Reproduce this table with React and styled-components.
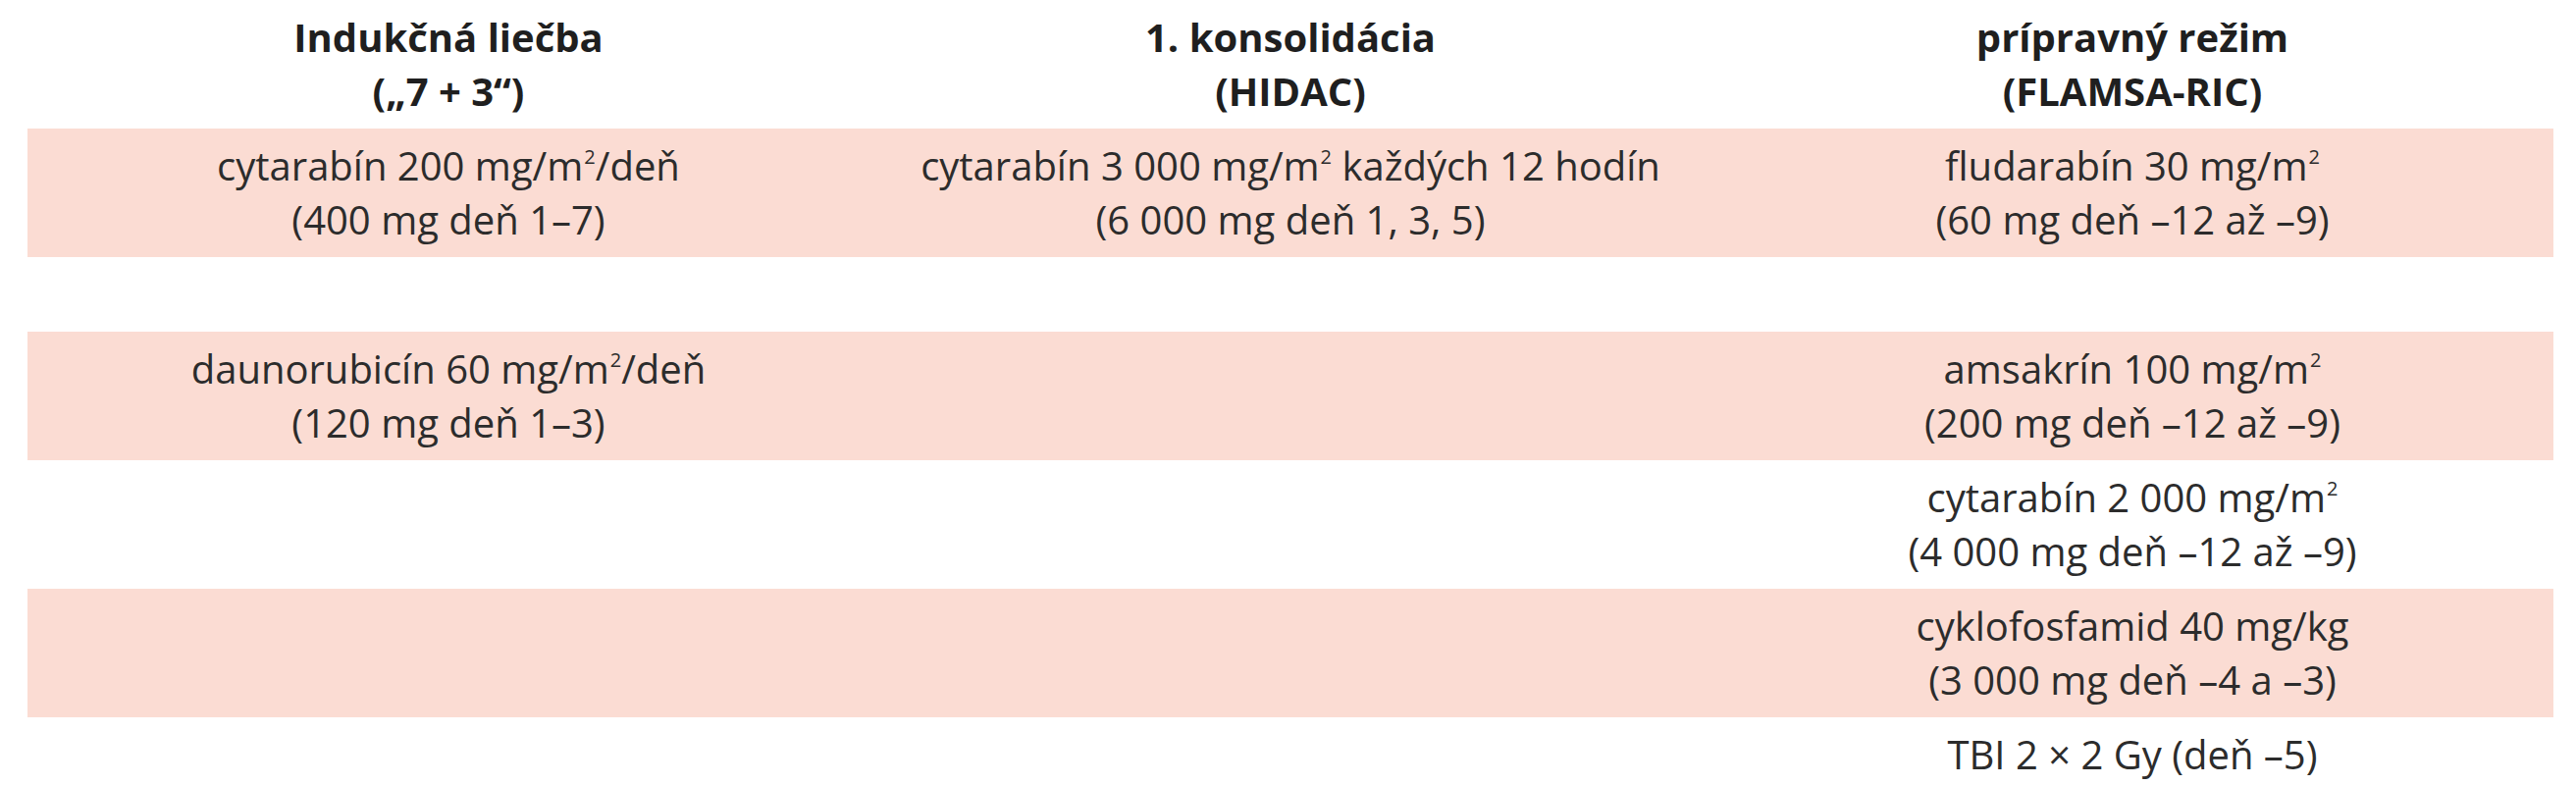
import React from "react";
import styled, { createGlobalStyle } from "styled-components";

const GlobalStyle = createGlobalStyle`
  html, body {
    margin: 0;
    padding: 0;
    background: #ffffff;
  }
  body {
    font-family: "Open Sans", "Noto Sans", sans-serif;
    color: #2a2a2a;
  }
`;

const Page = styled.div`
  padding: 0 23px 0 28px;
`;

const Table = styled.table`
  width: 2574px;
  border-collapse: collapse;
  border-spacing: 0;
  table-layout: fixed;
`;

const Row = styled.tr`
  background: ${(p) => (p.$shaded ? "#fbdcd3" : "transparent")};
`;

const HeadCell = styled.th`
  padding: 10px 12px 11px;
  font-size: 40px;
  line-height: 55px;
  font-weight: 700;
  color: #1f1f1f;
  text-align: center;
  vertical-align: middle;
`;

const Cell = styled.td`
  padding: 10px 12px 11px;
  font-size: 40px;
  line-height: 55px;
  font-weight: 400;
  color: #2c2c2c;
  text-align: center;
  vertical-align: top;
`;

const Line = styled.div`
  white-space: nowrap;
`;

const Sup = styled.span`
  font-size: 0.5em;
  line-height: 0;
  vertical-align: 0.85em;
  margin-left: 1px;
`;

// "m2" -> m with a small raised 2
function Dose({ text }) {
  const parts = text.split("²");
  return parts.map((part, i) => (
    <React.Fragment key={i}>
      {part}
      {i < parts.length - 1 && <Sup>2</Sup>}
    </React.Fragment>
  ));
}

const header = [
  ["Indukčná liečba", "(„7 + 3“)"],
  ["1. konsolidácia", "(HIDAC)"],
  ["prípravný režim", "(FLAMSA-RIC)"],
];

const rows = [
  {
    shaded: true,
    cells: [
      ["cytarabín 200 mg/m²/deň", "(400 mg deň 1–7)"],
      ["cytarabín 3\u00a0000 mg/m² každých 12 hodín", "(6\u00a0000 mg deň 1, 3, 5)"],
      ["fludarabín 30 mg/m²", "(60 mg deň –12 až –9)"],
    ],
  },
  { shaded: false, cells: [["\u00a0"], [], []] },
  {
    shaded: true,
    cells: [
      ["daunorubicín 60 mg/m²/deň", "(120 mg deň 1–3)"],
      [],
      ["amsakrín 100 mg/m²", "(200 mg deň –12 až –9)"],
    ],
  },
  {
    shaded: false,
    cells: [[], [], ["cytarabín 2\u00a0000 mg/m²", "(4\u00a0000 mg deň –12 až –9)"]],
  },
  {
    shaded: true,
    cells: [[], [], ["cyklofosfamid 40 mg/kg", "(3\u00a0000 mg deň –4 a –3)"]],
  },
  { shaded: false, cells: [[], [], ["TBI 2 × 2 Gy (deň –5)"]] },
];

export default function App() {
  return (
    <>
      <GlobalStyle />
      <Page>
        <Table>
          <thead>
            <Row>
              {header.map((lines, i) => (
                <HeadCell key={i}>
                  {lines.map((l, j) => (
                    <Line key={j}>{l}</Line>
                  ))}
                </HeadCell>
              ))}
            </Row>
          </thead>
          <tbody>
            {rows.map((row, r) => (
              <Row key={r} $shaded={row.shaded}>
                {row.cells.map((lines, c) => (
                  <Cell key={c}>
                    {lines.map((l, j) => (
                      <Line key={j}>
                        <Dose text={l} />
                      </Line>
                    ))}
                  </Cell>
                ))}
              </Row>
            ))}
          </tbody>
        </Table>
      </Page>
    </>
  );
}
